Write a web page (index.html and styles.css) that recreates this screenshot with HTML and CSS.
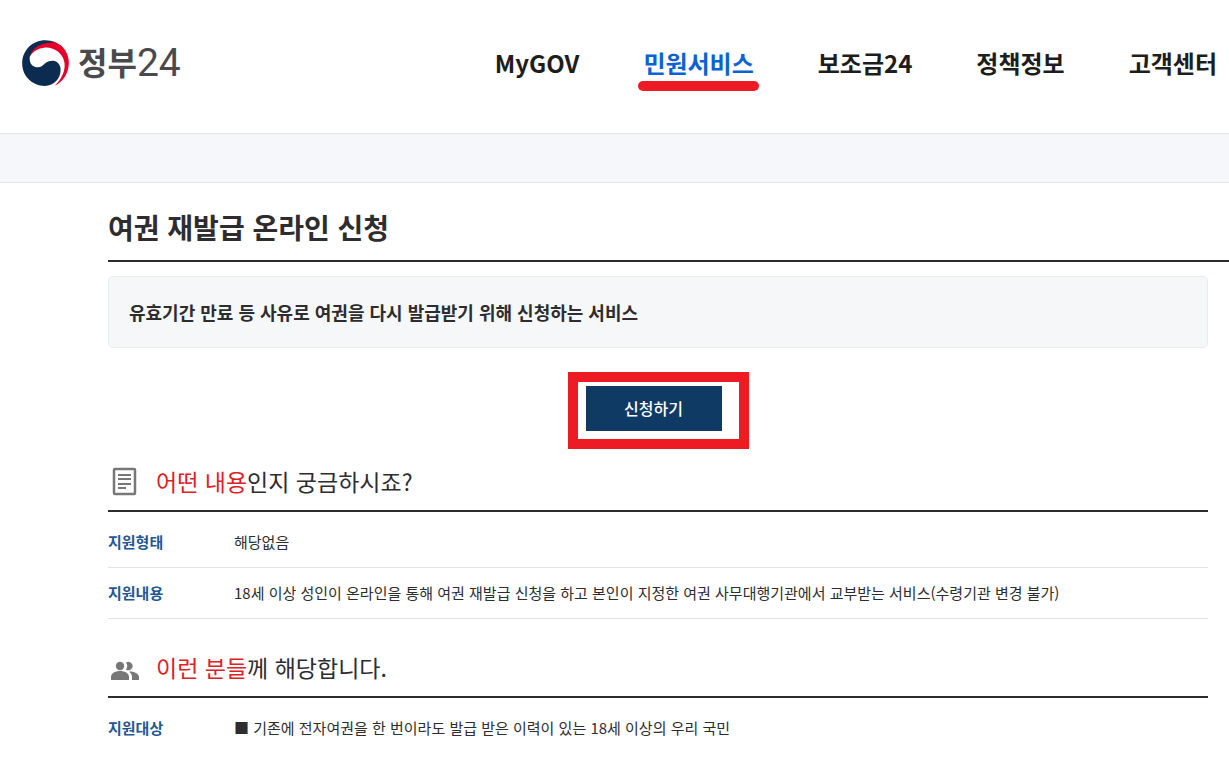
FILE: index.html
```html
<!DOCTYPE html>
<html lang="ko">
<head>
<meta charset="utf-8">
<meta name="viewport" content="width=device-width, initial-scale=1">
<title>여권 재발급 온라인 신청 | 정부24</title>
<link rel="stylesheet" href="styles.css">
</head>
<body>
<header class="header">
  <a class="logo" href="#">
    <svg class="logo-mark" viewBox="0 0 140 138" aria-hidden="true">
      <path fill="#e4002b" d="M22 50C26 20 60 2 98 6C124 16 140 40 140 68C140 98 124 124 98 137C118 116 130 94 127 68C122 40 96 20 66 23C44 25 32 36 22 50Z"/>
      <path fill="#0b2b50" d="M100 7C50 -14 0 20 0 70C0 110 32 138 68 138C98 138 118 112 115 84C112 66 96 58 80 64C66 68 62 82 48 82C30 82 20 68 23 50C30 22 58 6 100 7Z"/>
    </svg>
    <span class="logo-text"><span class="logo-name">정부</span><span class="logo-number">24</span></span>
  </a>
  <nav class="nav" aria-label="주 메뉴">
    <a class="nav-link" href="#">MyGOV</a>
    <a class="nav-link nav-link-active" href="#" aria-current="page">민원서비스</a>
    <a class="nav-link" href="#">보조금24</a>
    <a class="nav-link" href="#">정책정보</a>
    <a class="nav-link" href="#">고객센터</a>
  </nav>
</header>
<div class="band"></div>
<main class="main">
  <h1 class="title">여권 재발급 온라인 신청</h1>
  <div class="content">
    <p class="summary">유효기간 만료 등 사유로 여권을 다시 발급받기 위해 신청하는 서비스</p>
    <div class="apply">
      <div class="apply-frame"><button class="apply-button" type="button">신청하기</button></div>
    </div>
    <section class="section">
      <h2 class="section-title">
        <svg class="section-icon" viewBox="0 0 32 32" aria-hidden="true">
          <rect x="6" y="4" width="21" height="25" rx="1" fill="none" stroke="#777" stroke-width="2.500"/>
          <path d="M10 10h13M10 14h13M10 19h13M10 23h8" stroke="#777" stroke-width="2"/>
        </svg>
        <span><em class="accent">어떤 내용</em>인지 궁금하시죠?</span>
      </h2>
      <table class="info">
        <tr><th scope="row">지원형태</th><td>해당없음</td></tr>
        <tr><th scope="row">지원내용</th><td>18세 이상 성인이 온라인을 통해 여권 재발급 신청을 하고 본인이 지정한 여권 사무대행기관에서 교부받는 서비스(수령기관 변경 불가)</td></tr>
      </table>
    </section>
    <section class="section">
      <h2 class="section-title">
        <svg class="section-icon" viewBox="0 0 32 32" aria-hidden="true">
          <g fill="#777">
            <circle cx="12" cy="15" r="4.200"/>
            <path d="M3 29v-3c0-8 18-8 18 0v3z"/>
            <path d="M18 11.500a4.200 4.200 0 1 1 0 7a6 6 0 0 0 0-7z"/>
            <path d="M21 20.500c5 0 10 2 10 5.500v3h-7v-3c0-2-1-4-3-5.500z"/>
          </g>
        </svg>
        <span><em class="accent">이런 분들</em>께 해당합니다.</span>
      </h2>
      <table class="info info-open">
        <tr><th scope="row">지원대상</th><td>■ 기존에 전자여권을 한 번이라도 발급 받은 이력이 있는 18세 이상의 우리 국민</td></tr>
      </table>
    </section>
  </div>
</main>
</body>
</html>
```
FILE: styles.css
```css
* { box-sizing: border-box; }
body {
  margin: 0;
  background: #fff;
  color: #2d2d2f;
  font-family: "Noto Sans CJK KR", sans-serif;
  font-size: 15px;
  line-height: 24px;
}
a { color: inherit; text-decoration: none; }
h1, h2, p { margin: 0; }

.header {
  display: flex;
  align-items: center;
  justify-content: space-between;
  padding: 35px 12px 42px 22px;
  border-bottom: 1px solid #e2e5e9;
}
.logo { display: flex; align-items: center; gap: 9px; color: #4a4a4c; }
.logo-mark { width: 47px; height: 46px; }
.logo-text {
  display: flex;
  align-items: center;
  font-size: 32px;
  line-height: 48px;
}
.logo-name { padding-bottom: 4px; font-weight: 700; }
.logo-number { font-family: Roboto, sans-serif; font-size: 39px; font-weight: 400; }
.nav { display: flex; gap: 64px; }
.nav-link {
  position: relative;
  color: #1d1d1d;
  font-size: 24px;
  font-weight: 700;
  line-height: 56px;
  white-space: nowrap;
}
.nav-link-active { color: #0b62d6; }
.nav-link-active::after {
  content: "";
  position: absolute;
  right: -5px;
  bottom: 0;
  left: -5px;
  height: 10px;
  border-radius: 5px;
  background: #ed1c24;
}
.band { height: 49px; background: #f5f7fa; border-bottom: 1px solid #e2e5e9; }

.main { padding-left: 108px; }
.title {
  padding: 24px 0 13px;
  border-bottom: 2px solid #2d2d2f;
  font-size: 28px;
  font-weight: 700;
  line-height: 40px;
}
.content { padding: 14px 21px 0 0; }
.summary {
  padding: 20px;
  border: 1px solid #e9ebed;
  border-radius: 5px;
  background: #f6f7f9;
  font-size: 18px;
  font-weight: 700;
  line-height: 30px;
}
.apply { display: flex; justify-content: center; padding-top: 24px; }
.apply-frame {
  display: flex;
  padding: 4px 17px 8px 8px;
  border: 10px solid #ed1c24;
}
.apply-button {
  width: 136px;
  height: 45px;
  padding: 0 0 2px;
  border: 0;
  background: #0f3a63;
  color: #fff;
  font: 500 16px/24px "Noto Sans CJK KR", sans-serif;
}
.section + .section { padding-top: 16px; }
.section-title {
  display: flex;
  align-items: center;
  gap: 16px;
  padding: 12px 0 9px;
  border-bottom: 2px solid #2d2d2f;
  font-size: 23px;
  font-weight: 400;
  line-height: 40px;
}
.section-icon { width: 32px; height: 32px; }
.accent { color: #dc2127; font-style: normal; }
.info { width: 100%; margin-top: 5px; border-collapse: collapse; }
.info th, .info td {
  padding: 13px 0;
  border-bottom: 1px solid #e2e2e2;
  text-align: left;
}
.info th { width: 126px; color: #245791; font-weight: 700; }
.info-open th, .info-open td { border-bottom: 0; }
```
